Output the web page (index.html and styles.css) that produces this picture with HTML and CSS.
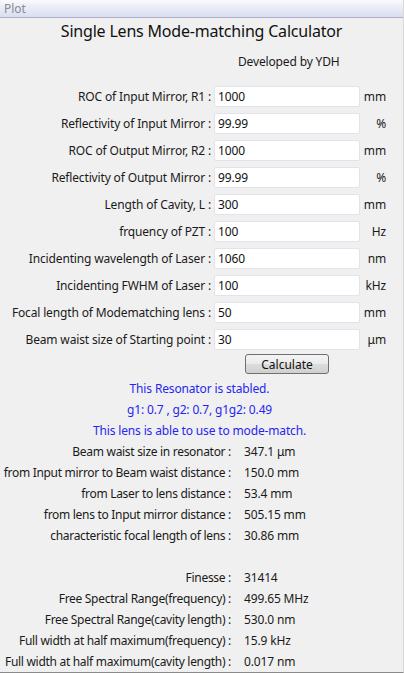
FILE: index.html
```html
<!DOCTYPE html>
<html>
<head>
<meta charset="utf-8">
<link rel="stylesheet" href="styles.css">
</head>
<body>
<div class="window">
  <div class="titlebar">Plot</div>
  <div class="content">
    <h1 class="title">Single Lens Mode-matching Calculator</h1>
    <div class="dev">Developed by YDH</div>
    <div class="form">
      <label class="lbl">ROC of Input Mirror, R1 :</label><div class="field">1000</div><span class="unit">mm</span>
      <label class="lbl">Reflectivity of Input Mirror :</label><div class="field">99.99</div><span class="unit">%</span>
      <label class="lbl">ROC of Output Mirror, R2 :</label><div class="field">1000</div><span class="unit">mm</span>
      <label class="lbl">Reflectivity of Output Mirror :</label><div class="field">99.99</div><span class="unit">%</span>
      <label class="lbl">Length of Cavity, L :</label><div class="field">300</div><span class="unit">mm</span>
      <label class="lbl">frquency of PZT :</label><div class="field">100</div><span class="unit">Hz</span>
      <label class="lbl">Incidenting wavelength of Laser :</label><div class="field">1060</div><span class="unit">nm</span>
      <label class="lbl">Incidenting FWHM of Laser :</label><div class="field">100</div><span class="unit">kHz</span>
      <label class="lbl">Focal length of Modematching lens :</label><div class="field">50</div><span class="unit">mm</span>
      <label class="lbl">Beam waist size of Starting point :</label><div class="field">30</div><span class="unit">μm</span>
    </div>
    <div class="btnrow"><button class="btn">Calculate</button></div>
    <div class="status">
      <div>This Resonator is stabled.</div>
      <div>g1: 0.7 , g2: 0.7, g1g2: 0.49</div>
      <div>This lens is able to use to mode-match.</div>
    </div>
    <div class="results">
      <span class="rl">Beam waist size in resonator :</span><span class="rv">347.1 μm</span>
      <span class="rl">from Input mirror to Beam waist distance :</span><span class="rv">150.0 mm</span>
      <span class="rl">from Laser to lens distance :</span><span class="rv">53.4 mm</span>
      <span class="rl">from lens to Input mirror distance :</span><span class="rv">505.15 mm</span>
      <span class="rl">characteristic focal length of lens :</span><span class="rv">30.86 mm</span>
      <span class="rl blank"></span><span class="rv blank"></span>
      <span class="rl">Finesse :</span><span class="rv">31414</span>
      <span class="rl">Free Spectral Range(frequency) :</span><span class="rv">499.65 MHz</span>
      <span class="rl">Free Spectral Range(cavity length) :</span><span class="rv">530.0 nm</span>
      <span class="rl">Full width at half maximum(frequency) :</span><span class="rv">15.9 kHz</span>
      <span class="rl">Full width at half maximum(cavity length) :</span><span class="rv">0.017 nm</span>
    </div>
  </div>
</div>
</body>
</html>
```

FILE: styles.css
```css
html, body {
  margin: 0;
  padding: 0;
  background: #f0f0f0;
}
body {
  font-family: "Noto Sans", "Open Sans", sans-serif;
  font-size: 12px;
  letter-spacing: -0.15px;
  color: #1a1a1a;
}
.window {
  width: 404px;
  height: 673px;
  box-sizing: border-box;
  border-bottom: 1px solid #8a8a8a;
  border-right: 1px solid #d8d8d8;
  overflow: hidden;
}
.titlebar {
  height: 17px;
  line-height: 17px;
  padding-left: 4px;
  color: #8a8a92;
  font-size: 12px;
  letter-spacing: 0;
  background: linear-gradient(#fbfbfd 0%, #eef0f8 30%, #dadef2 100%);
  border-bottom: 1px solid #aeb0c8;
}
.content {
  display: flex;
  flex-direction: column;
}
.title {
  margin: 3px 0 0 0;
  font-weight: normal;
  font-size: 16px;
  letter-spacing: -0.2px;
  line-height: 20px;
  text-align: center;
  color: #111;
}
.dev {
  margin-top: 13px;
  padding-left: 238px;
  line-height: 16px;
}
.form {
  margin-top: 16px;
  display: grid;
  grid-template-columns: 214px 146px 26px;
  grid-auto-rows: 21px;
  row-gap: 6px;
  align-items: center;
}
.lbl {
  text-align: right;
  padding-right: 3px;
  white-space: nowrap;
}
.field {
  height: 21px;
  box-sizing: border-box;
  background: #fff;
  border: 1px solid #e2e3ea;
  border-radius: 2px;
  padding-left: 3px;
  line-height: 19px;
  color: #111;
}
.unit {
  text-align: right;
}
.btnrow {
  display: grid;
  grid-template-columns: 214px 146px;
  margin-top: 4px;
}
.btn {
  grid-column: 2;
  justify-self: center;
  width: 84px;
  height: 20px;
  padding: 0;
  font-family: inherit;
  font-size: 12px;
  color: #111;
  border: 1px solid #707070;
  border-radius: 3px;
  background: linear-gradient(#f3f3f3 0%, #ebebeb 50%, #dddddd 51%, #cfcfcf 100%);
}
.status {
  margin-top: 4px;
  color: #2626f2;
  text-align: center;
  line-height: 21px;
  padding-right: 4px;
}
.results {
  display: grid;
  grid-template-columns: 231px 1fr;
  grid-auto-rows: 21px;
  align-items: center;
}
.rl {
  display: flex;
  justify-content: flex-end;
  white-space: nowrap;
  letter-spacing: -0.3px;
}
.rv {
  padding-left: 13px;
  white-space: nowrap;
}
```
